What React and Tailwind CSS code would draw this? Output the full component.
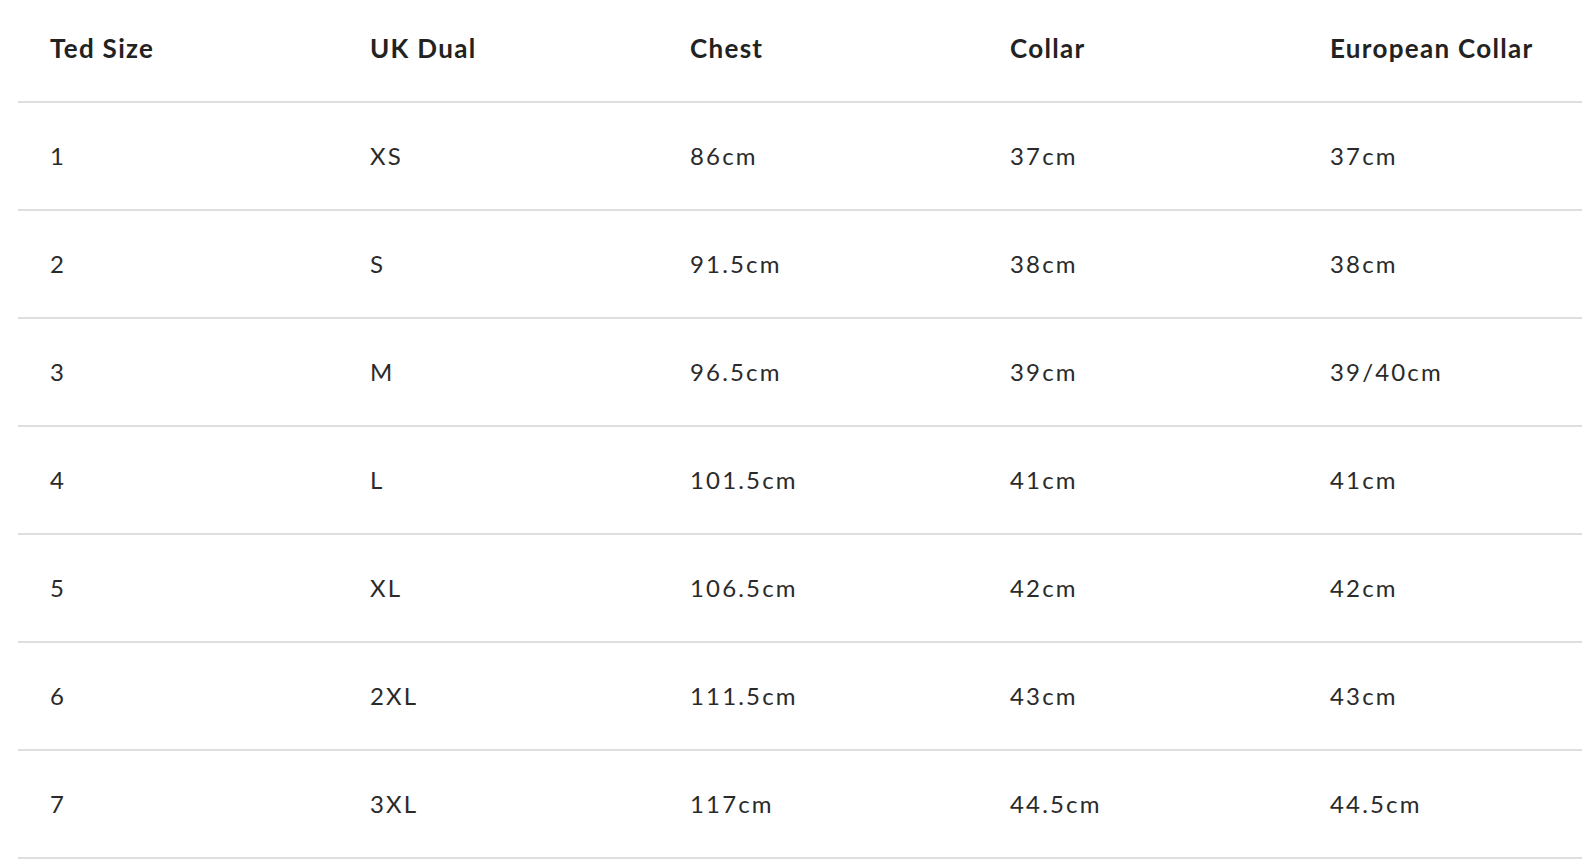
import React from "react";

const rows = [
  ["1", "XS", "86cm", "37cm", "37cm"],
  ["2", "S", "91.5cm", "38cm", "38cm"],
  ["3", "M", "96.5cm", "39cm", "39/40cm"],
  ["4", "L", "101.5cm", "41cm", "41cm"],
  ["5", "XL", "106.5cm", "42cm", "42cm"],
  ["6", "2XL", "111.5cm", "43cm", "43cm"],
  ["7", "3XL", "117cm", "44.5cm", "44.5cm"],
];

const headers = ["Ted Size", "UK Dual", "Chest", "Collar", "European Collar"];

export default function App() {
  return (
    <div className="w-full h-[862px] overflow-hidden bg-white text-[#222222]" style={{ fontFamily: "Lato, 'Noto Sans', sans-serif" }}>
      <div className="ml-[18px] w-[1600px]">
        <div className="grid grid-cols-[repeat(5,320px)] h-[103px] border-b-2 border-[#dedede] items-center">
          {headers.map((h) => (
            <div key={h} className="pl-[32px] pb-[4px] text-[26px] font-bold tracking-[0.05em]">
              {h}
            </div>
          ))}
        </div>
        {rows.map((r, i) => (
          <div key={i} className="grid grid-cols-[repeat(5,320px)] h-[108px] border-b-2 border-[#dedede] items-center">
            {r.map((c, j) => (
              <div key={j} className="pl-[32px] text-[24px] tracking-[0.09em] text-[#2a2a2a]">
                {c}
              </div>
            ))}
          </div>
        ))}
      </div>
    </div>
  );
}
